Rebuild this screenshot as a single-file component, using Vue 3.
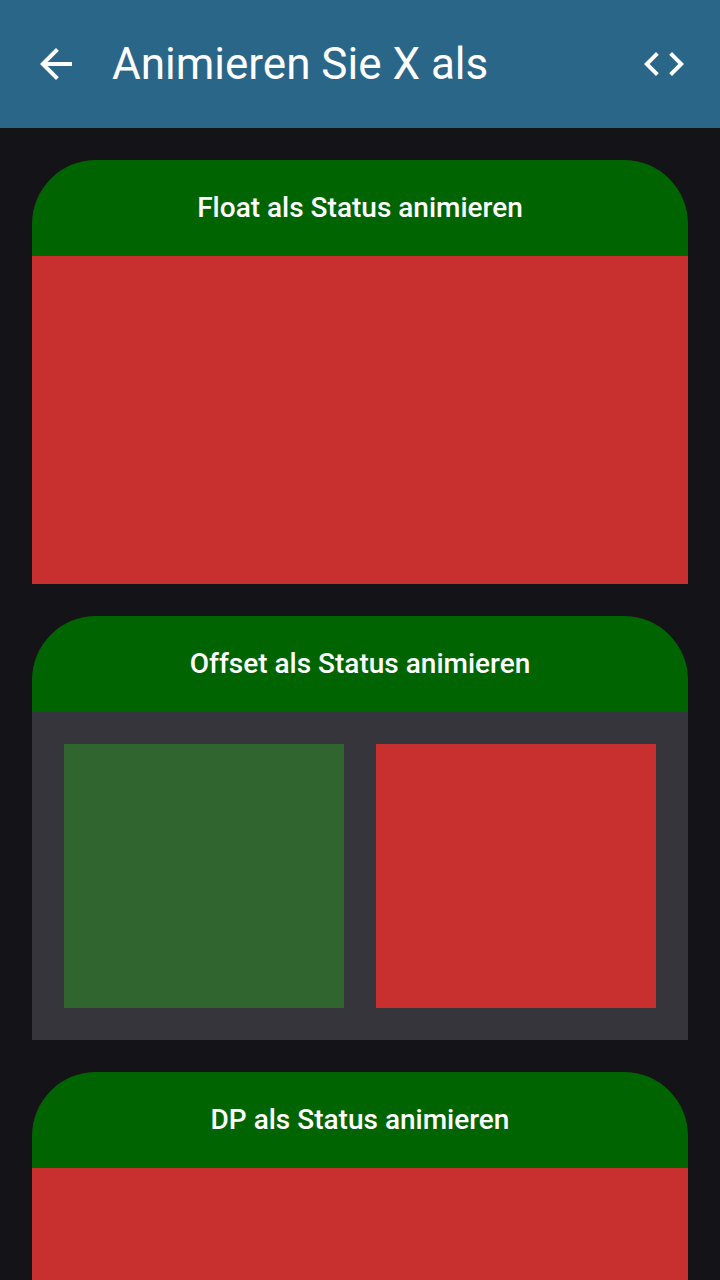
<script setup>
const cards = [
  { title: 'Float als Status animieren', kind: 'single' },
  { title: 'Offset als Status animieren', kind: 'pair' },
  { title: 'DP als Status animieren', kind: 'single' }
]
</script>

<template>
  <div class="screen">
    <header class="bar">
      <button class="icon" type="button" aria-label="Zurück">
        <svg viewBox="0 0 24 24" aria-hidden="true"><path d="M20 11H7.83l5.59-5.59L12 4l-8 8 8 8 1.41-1.41L7.83 13H20v-2z" /></svg>
      </button>
      <h1>Animieren Sie X als</h1>
      <button class="icon" type="button" aria-label="Quellcode">
        <svg viewBox="0 0 24 24" aria-hidden="true"><path d="M9.4 16.6L4.8 12l4.6-4.6L8 6l-6 6 6 6 1.4-1.4zm5.2 0l4.6-4.6-4.6-4.6L16 6l6 6-6 6-1.4-1.4z" /></svg>
      </button>
    </header>
    <main class="list">
      <section v-for="card in cards" :key="card.title">
        <button class="action" type="button">{{ card.title }}</button>
        <div v-if="card.kind === 'single'" class="stage red"></div>
        <div v-else class="stage pair">
          <div class="green"></div>
          <div class="red"></div>
        </div>
      </section>
    </main>
  </div>
</template>

<style>
body {
  margin: 0;
  background: #141318;
}
</style>

<style scoped>
.screen {
  height: 100vh;
  display: flex;
  flex-direction: column;
  background: #141318;
  color: #fff;
  font-family: Roboto, "Liberation Sans", sans-serif;
}
.bar {
  flex: none;
  display: flex;
  align-items: center;
  height: 128px;
  padding: 0 32px;
  box-sizing: border-box;
  background: #2a6688;
}
.icon {
  flex: none;
  width: 48px;
  height: 48px;
  padding: 0;
  border: 0;
  background: none;
  color: #fff;
}
.icon svg {
  display: block;
  width: 48px;
  height: 48px;
  fill: currentColor;
}
h1 {
  flex: 1;
  margin: 0 0 0 32px;
  font-size: 44px;
  line-height: 56px;
  font-weight: 400;
}
.list {
  flex: 1;
  min-height: 0;
  display: flex;
  flex-direction: column;
  gap: 32px;
  padding: 32px;
  overflow-y: auto;
  scrollbar-width: none;
}
section {
  flex: none;
}
.action {
  display: block;
  width: 100%;
  height: 96px;
  padding: 0;
  border: 0;
  border-radius: 64px 64px 0 0;
  background: #006400;
  color: #fff;
  font: inherit;
  font-size: 28px;
  line-height: 40px;
  font-weight: 500;
}
.stage {
  height: 328px;
  box-sizing: border-box;
}
.red {
  background: #c83030;
}
.green {
  background: #31652f;
}
.pair {
  display: grid;
  grid-template-columns: 1fr 1fr;
  gap: 32px;
  padding: 32px;
  background: #36353c;
}
</style>
